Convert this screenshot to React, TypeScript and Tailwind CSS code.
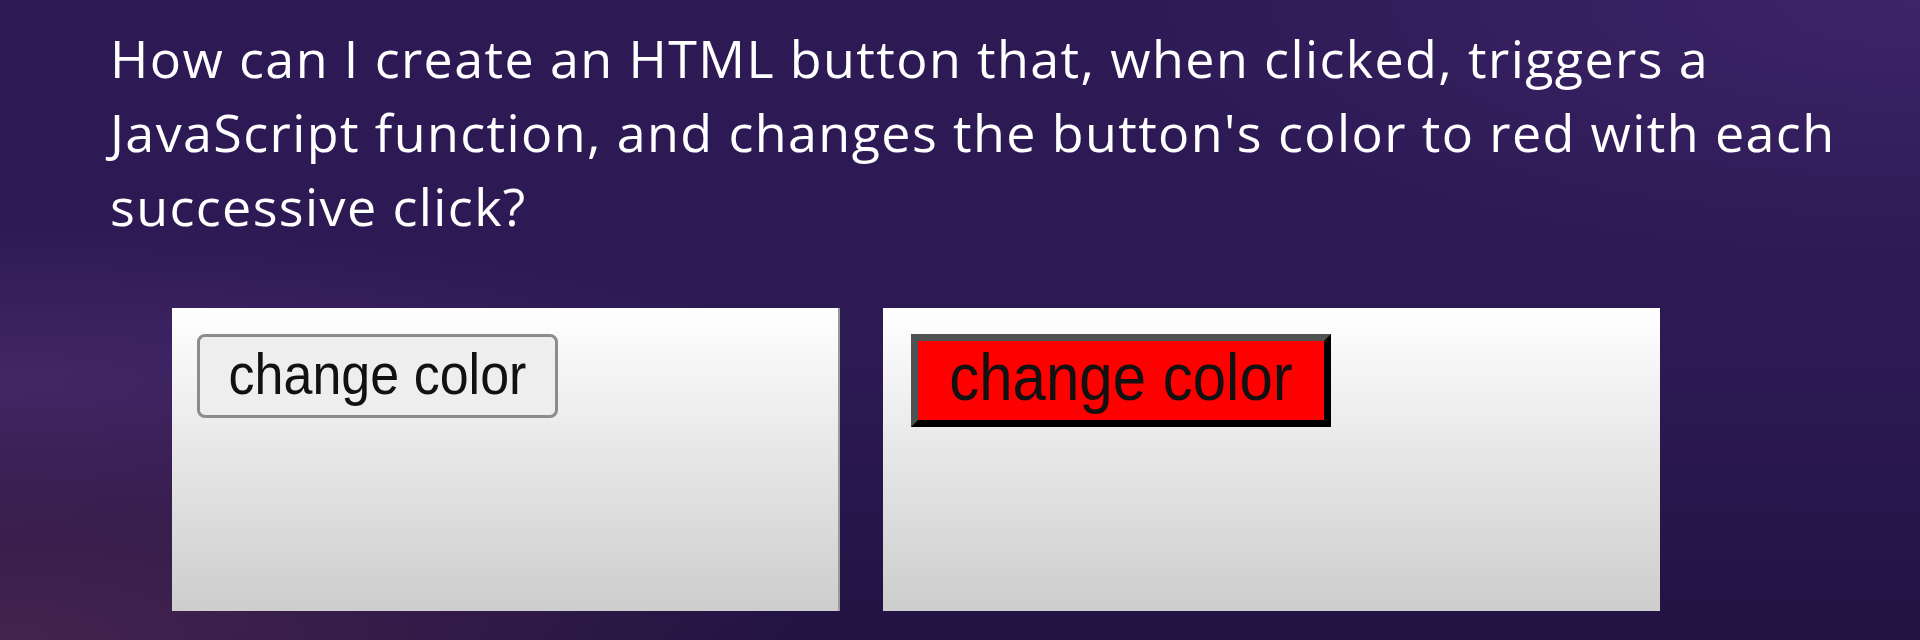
export default function App() {
  return (
    <div className="w-[1920px] h-[640px] overflow-hidden bg-[#2d1a55] relative">
      <div className="absolute inset-0 bg-[linear-gradient(to_bottom,rgba(0,0,0,0)_55%,rgba(12,5,30,0.35)_100%)]" />
      <div className="absolute inset-0 bg-[radial-gradient(ellipse_at_100%_0%,#3d2468_0%,rgba(60,35,100,0)_30%)]" />
      <div className="absolute inset-0 bg-[radial-gradient(ellipse_at_0%_60%,#432666_0%,rgba(67,38,102,0)_30%)]" />
      <div className="absolute inset-0 bg-[radial-gradient(ellipse_at_0%_100%,#45244f_0%,rgba(69,36,79,0)_30%)]" />
      <div className="relative flex flex-col">
        <h1 className="pl-[110px] pt-[21px] text-white text-[52px] leading-[74px] tracking-[1.4px] font-normal font-['Open_Sans','Noto_Sans',sans-serif]">
          How can I create an HTML button that, when clicked, triggers a
          <br />
          JavaScript function, and changes the button's color to red with each
          <br />
          successive click?
        </h1>
        <div className="flex gap-[43px] pl-[172px] pt-[65px]">
          <div className="w-[668px] h-[303px] bg-gradient-to-b from-white via-[#e6e6e6] to-[#cdcdcd] border-r-2 border-[#9a9a9a] pt-[26px] pl-[25px]">
            <button className="w-[361px] h-[84px] rounded-[8px] border-[3px] border-[#8c8c8c] bg-[#eeeeee] text-[#111] text-[52px] leading-none font-['Liberation_Sans',Arial,sans-serif] pb-[4px]">
              <span className="inline-block scale-y-110">change color</span>
            </button>
          </div>
          <div className="w-[777px] h-[303px] bg-gradient-to-b from-white via-[#e6e6e6] to-[#cdcdcd] pt-[26px] pl-[28px]">
            <button className="w-[420px] h-[93px] border-[7px] border-t-[#4f5252] border-l-[#4f5252] border-b-black border-r-black bg-[#ff0000] text-[#111] text-[60px] leading-none font-['Liberation_Sans',Arial,sans-serif] pb-[6px]">
              <span className="inline-block scale-y-110">change color</span>
            </button>
          </div>
        </div>
      </div>
    </div>
  );
}
